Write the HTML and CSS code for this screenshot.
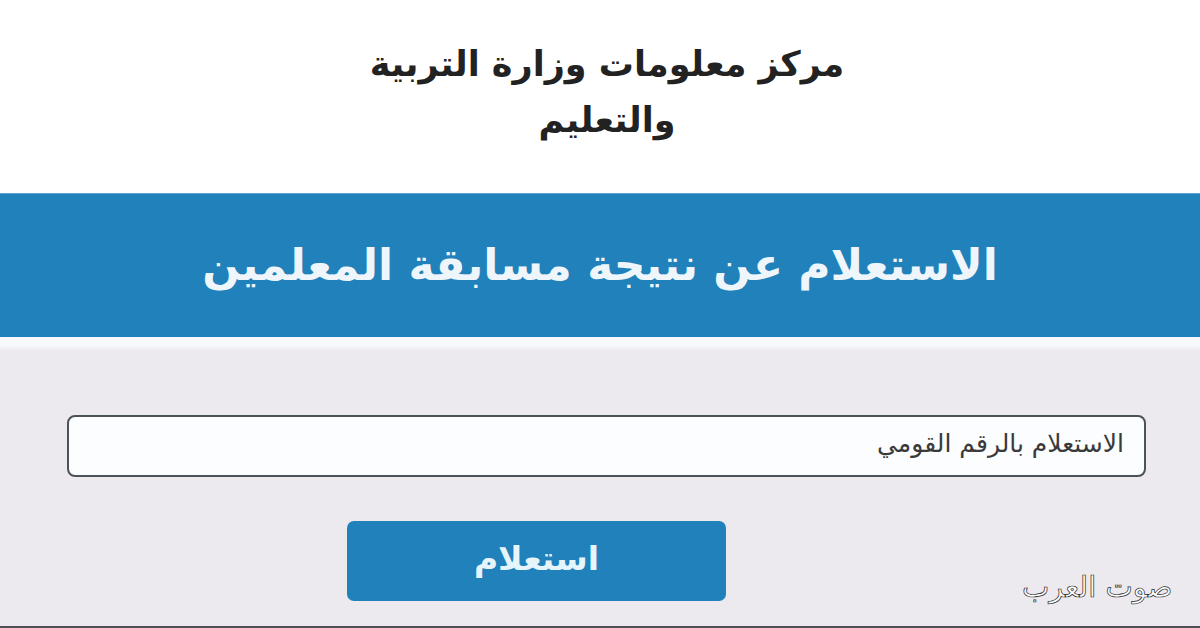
FILE: index.html
```html
<!DOCTYPE html>
<html lang="ar" dir="rtl">
<head>
<meta charset="utf-8">
<title>الاستعلام عن نتيجة مسابقة المعلمين</title>
<link rel="stylesheet" href="styles.css">
</head>
<body>
<div class="page">
  <header class="top">
    <h1 class="site-title">مركز معلومات وزارة التربية<br>والتعليم</h1>
  </header>
  <section class="band">
    <h2 class="band-title">الاستعلام عن نتيجة مسابقة المعلمين</h2>
  </section>
  <main class="content">
    <form class="query-form">
      <input class="query-input" type="text" placeholder="الاستعلام بالرقم القومي">
      <div class="btn-row">
        <button class="query-btn" type="button">استعلام</button>
      </div>
    </form>
    <div class="watermark">صوت العرب</div>
  </main>
</div>
</body>
</html>
```
FILE: styles.css
```css
* { box-sizing: border-box; }
html, body { margin: 0; padding: 0; }
body {
  width: 1200px;
  height: 628px;
  overflow: hidden;
  font-family: "DejaVu Sans", sans-serif;
  background: #ece9ef;
}
.page {
  display: flex;
  flex-direction: column;
  height: 628px;
}
.top {
  height: 193px;
  background: #ffffff;
  display: flex;
  justify-content: center;
  padding-top: 36px;
  padding-left: 14px;
}
.site-title {
  margin: 0;
  font-size: 35px;
  line-height: 56px;
  font-weight: bold;
  color: #222222;
  text-align: center;
}
.band {
  height: 144px;
  background: #2181ba;
  display: flex;
  align-items: center;
  justify-content: center;
  border-top: 1px solid #5ea6d2;
}
.band-title {
  margin: 0;
  font-size: 44px;
  font-weight: bold;
  color: #eef6fb;
  padding-bottom: 2px;
}
.content {
  flex: 1;
  position: relative;
  background: linear-gradient(#f6fafc 0, #f6fafc 8px, #ece9ef 14px, #ece9ef 100%);
  border-bottom: 2px solid #4e4f54;
  padding-top: 78px;
}
.query-form {
  display: flex;
  flex-direction: column;
}
.query-input {
  width: 1079px;
  height: 62px;
  margin-right: 54px;
  border: 2px solid #4b5359;
  border-radius: 8px;
  background: #fbfdfe;
  font-family: "DejaVu Sans", sans-serif;
  font-size: 25px;
  padding: 0 20px 6px 20px;
  direction: rtl;
  outline: none;
}
.query-input::placeholder { color: #3a3a3a; }
.btn-row {
  display: flex;
  margin-top: 44px;
  padding-right: 474px;
}
.query-btn {
  width: 379px;
  height: 80px;
  background: #2181ba;
  border: none;
  border-radius: 7px;
  color: #e6f4fb;
  font-family: "DejaVu Sans", sans-serif;
  font-size: 33px;
  font-weight: bold;
  padding-bottom: 6px;
}
.watermark {
  position: absolute;
  left: 1022px;
  top: 233px;
  font-size: 29px;
  color: #ffffff;
  -webkit-text-stroke: 0.7px #2a2a2a;
  letter-spacing: 1px;
}
```
